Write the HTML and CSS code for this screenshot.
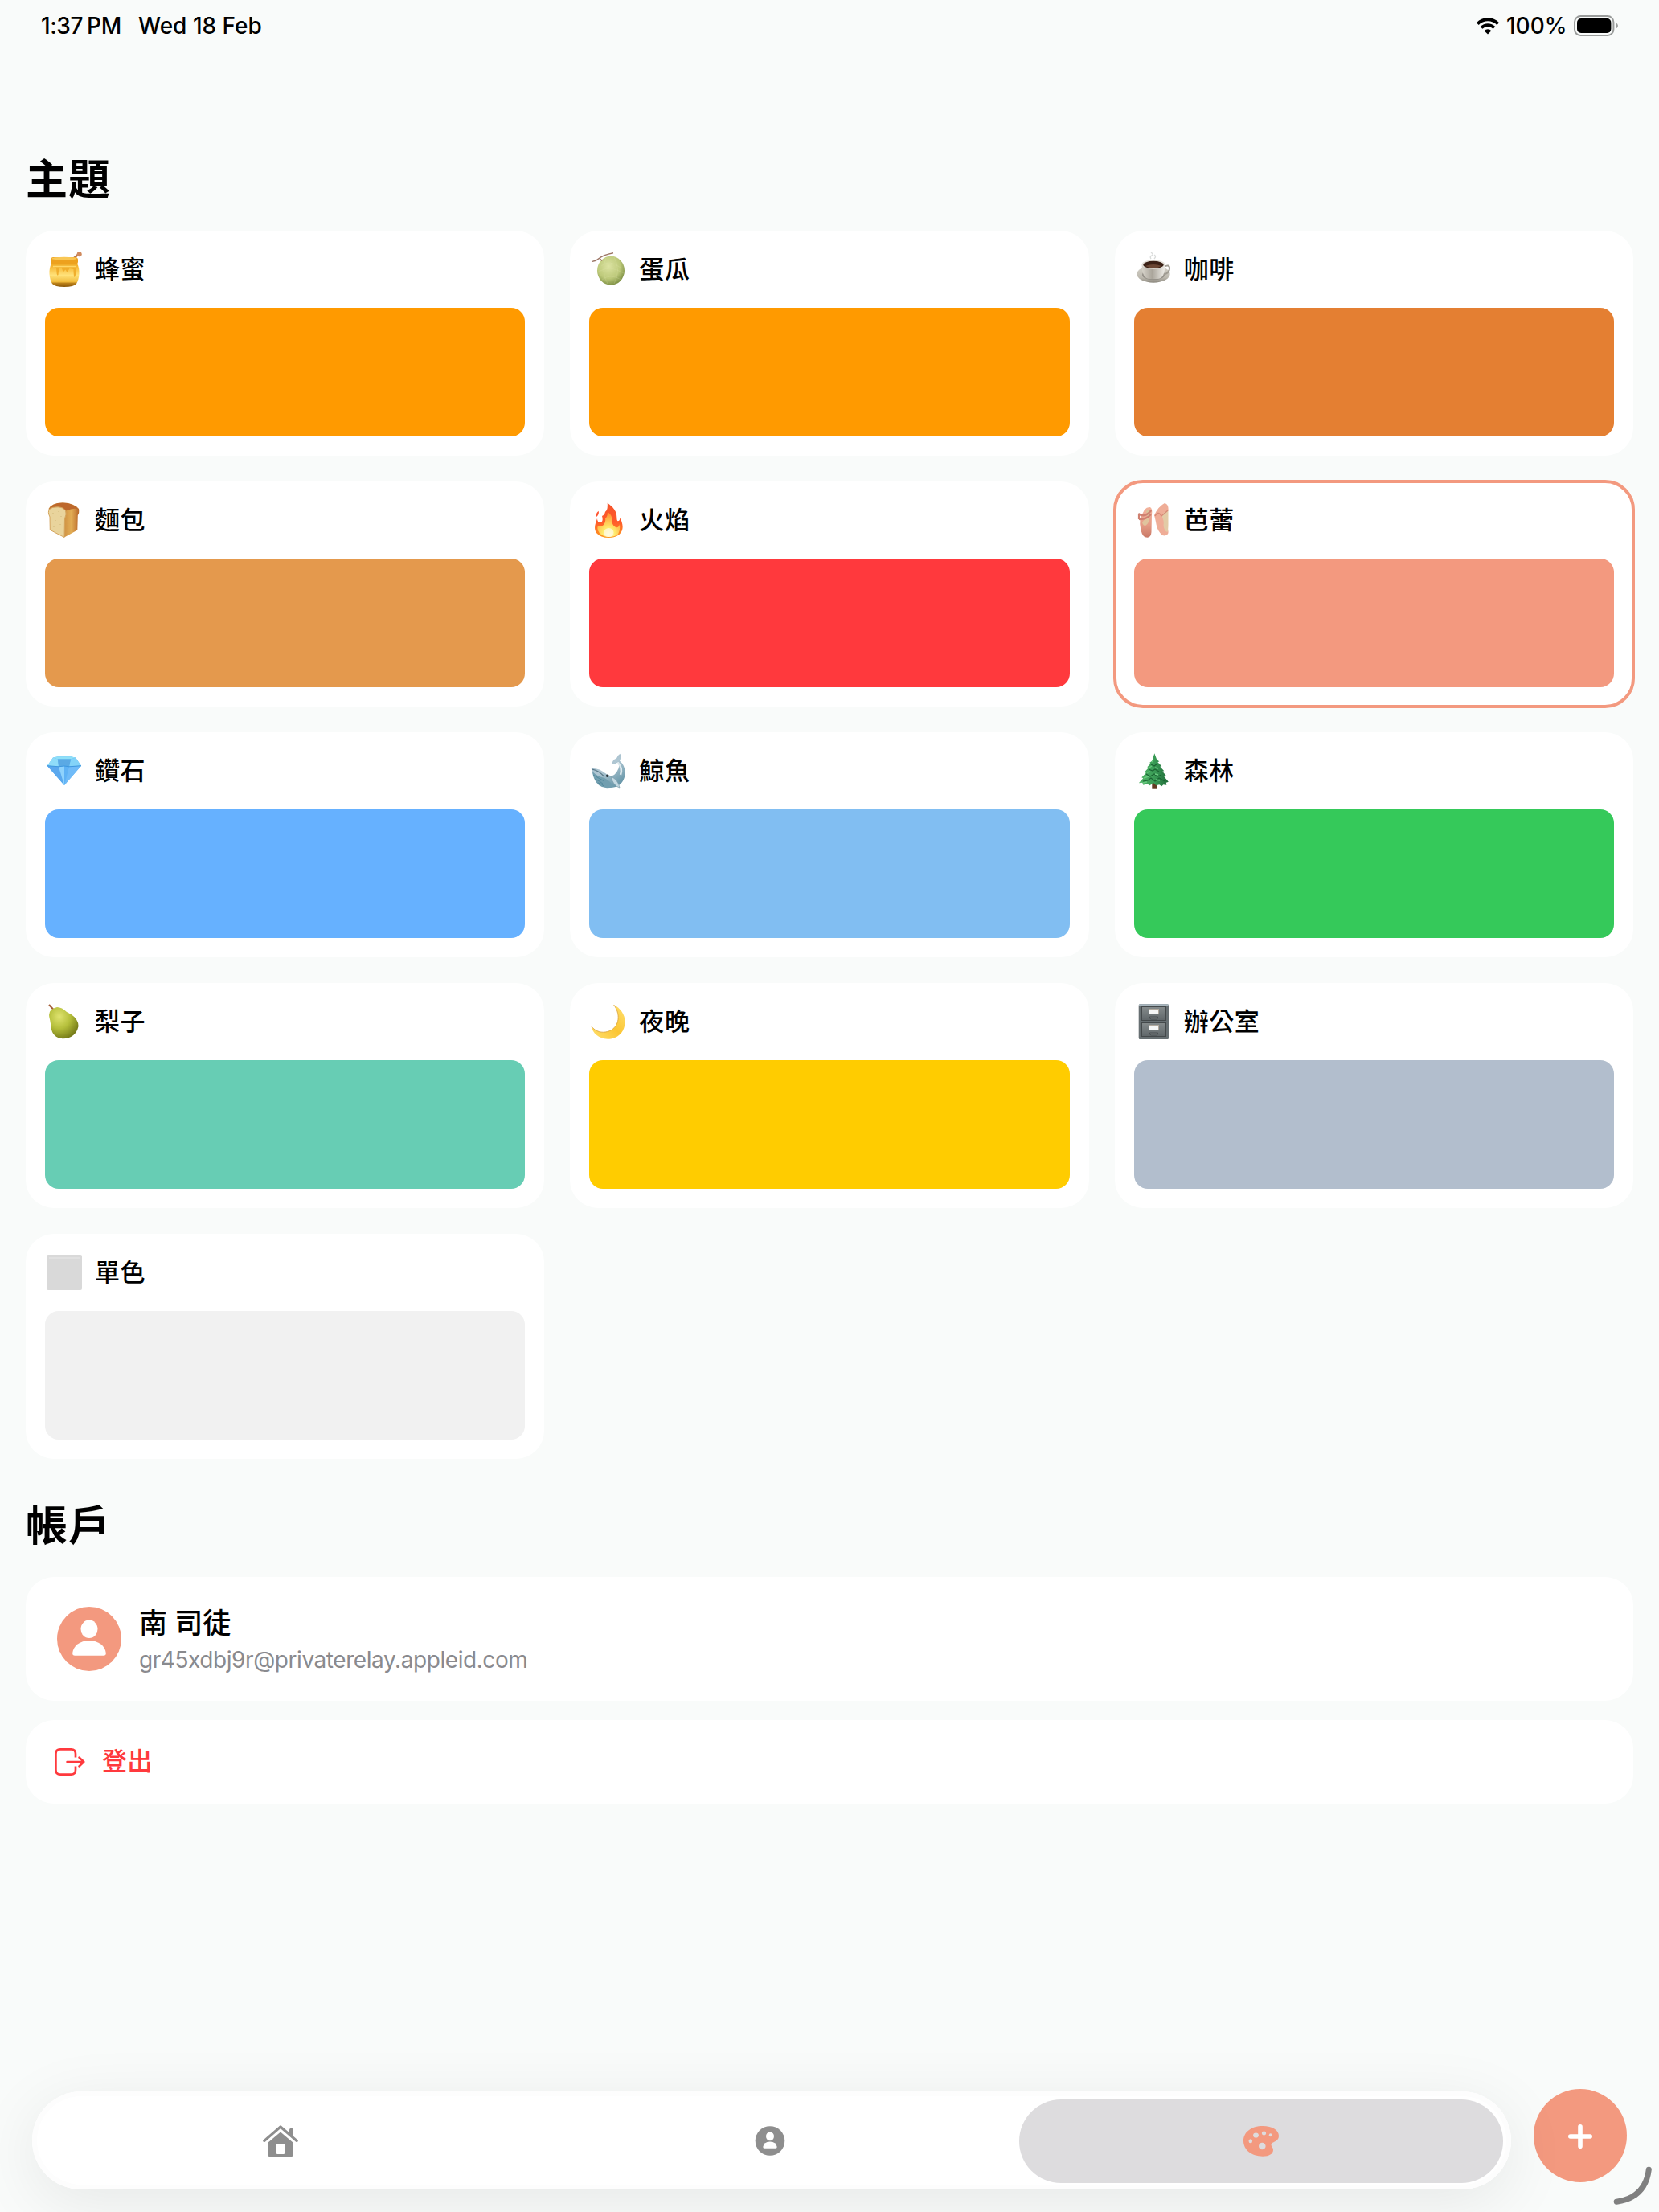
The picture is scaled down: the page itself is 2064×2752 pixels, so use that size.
FILE: index.html
```html
<!DOCTYPE html>
<html lang="zh-Hant">
<head>
    <meta charset="UTF-8" />
    <meta name="viewport" content="width=device-width, initial-scale=1" />
    <title>主題</title>
    <link rel="stylesheet" href="styles.css">
</head>
<body>
    <header class="status-bar">
        <span class="time">1:37<span class="ampm">PM</span></span>
        <span class="date">Wed 18 Feb</span>
        <svg class="wifi" viewBox="0 0 30 21">
            <path d="M2.3 7.6a18 18 0 0 1 25.4 0" fill="none" stroke="#000" stroke-width="4" />
            <path d="M7 12.4a11.4 11.4 0 0 1 16 0" fill="none" stroke="#000" stroke-width="3.8" />
            <path d="M10.6 16.2a6.2 6.2 0 0 1 8.8 0L15 20.6z" />
        </svg>
        <span class="percent">100%</span>
        <svg class="battery" viewBox="0 0 56 26">
            <rect x="1" y="1" width="48.4" height="24" rx="7.5" fill="none" stroke="#9a9c9b" stroke-width="2" />
            <rect x="4" y="4" width="42.4" height="18" rx="5" />
            <path d="M52 9q3 1.4 3 4t-3 4z" fill="#9a9c9b" />
        </svg>
    </header>

    <main>
        <h2>主題</h2>
        <div class="themes">
            <div class="card">
                <div class="name">
                    <svg viewBox="0 0 44 44">
                        <defs>
                            <linearGradient id="pot" x2="0" y2="1"><stop offset="0" stop-color="#f3a81c" /><stop offset=".5" stop-color="#ffe27a" /><stop offset=".78" stop-color="#f0bb3c" /><stop offset=".85" stop-color="#b57b16" /><stop offset="1" stop-color="#8c5a0c" /></linearGradient>
                        </defs>
                        <path d="M33 9l7-6" stroke="#b9764a" stroke-width="2.4" />
                        <circle cx="40.7" cy="3.2" r="3" fill="#d08a5e" />
                        <path d="M6 15C2 22 3 34 7 40q3 4 15 4t15-4c4-6 5-18 1-25z" fill="url(#pot)" />
                        <rect x="5" y="7" width="34" height="9" rx="3.5" fill="#eda11e" />
                        <ellipse cx="22" cy="8.7" rx="15.5" ry="2" fill="#f9c755" />
                        <path d="M7 16h30v5q-1 11-2.200 11T33.500 22l-5-1-3 5-2-3.500-3 3-2-6-3 .5-1 9q-1 2-1.800-1l-.7-8-3-1z" fill="#f0ae2c" />
                        <path d="M8 18.500h28" stroke="#ffd768" stroke-width="1.6" />
                    </svg>
                    <span>蜂蜜</span>
                </div>
                <div class="swatch honey"></div>
            </div>
            <div class="card">
                <div class="name">
                    <svg viewBox="0 0 44 44">
                        <defs>
                            <radialGradient id="melon" cx=".42" cy=".35" r=".7"><stop offset="0" stop-color="#dce3a2" /><stop offset=".6" stop-color="#bdc97a" /><stop offset="1" stop-color="#75883d" /></radialGradient>
                        </defs>
                        <ellipse cx="25" cy="23.7" rx="17" ry="18" fill="url(#melon)" />
                        <path d="M2 12.4q5-.7 9-4.4T28 1.7M11 8.500l3 3" fill="none" stroke="#9b7564" stroke-width="1.4" />
                        <path d="M13 18q10-9 24 2M10 25q13-9 31 2M14 35q10-8 24 0M19 8q-7 16 2 32M29 7q9 16 0 33" fill="none" stroke="#e3e9b4" stroke-width=".7" opacity=".3" />
                    </svg>
                    <span>蛋瓜</span>
                </div>
                <div class="swatch melon"></div>
            </div>
            <div class="card">
                <div class="name">
                    <svg viewBox="0 0 44 44">
                        <defs>
                            <linearGradient id="cup"><stop offset="0" stop-color="#d8d4cb" /><stop offset=".45" stop-color="#aaa59b" /><stop offset="1" stop-color="#efede8" /></linearGradient>
                            <linearGradient id="saucer" x2="0" y2="1"><stop offset="0" stop-color="#d6d3ca" /><stop offset=".7" stop-color="#bdb9af" /><stop offset="1" stop-color="#8d897f" /></linearGradient>
                        </defs>
                        <path d="M19 9q-2-3 1-4t-1-4M23 9q3-3 0-5" fill="none" stroke="#dadcdb" stroke-width="1.4" />
                        <ellipse cx="22" cy="28" rx="20.6" ry="10.7" fill="url(#saucer)" />
                        <ellipse cx="22" cy="29" rx="14" ry="6.5" fill="#96928a" />
                        <path d="M35 19q7-4 7 2t-8 8" fill="none" stroke="#a09c93" stroke-width="2" />
                        <path d="M7.6 16q0 18 10 18h9q10 0 9.6-18z" fill="url(#cup)" />
                        <ellipse cx="22" cy="16" rx="14.4" ry="5.7" fill="#e4e1da" />
                        <ellipse cx="22" cy="16.4" rx="12.6" ry="4.6" fill="#3b2116" />
                        <path d="M12 18q10-4 20 0-9 5-20 0z" fill="#6a4633" />
                    </svg>
                    <span>咖啡</span>
                </div>
                <div class="swatch coffee"></div>
            </div>

            <div class="card">
                <div class="name">
                    <svg viewBox="0 0 44 44">
                        <defs>
                            <linearGradient id="side"><stop offset=".5" stop-color="#cf9142" /><stop offset=".75" stop-color="#e2ad55" /><stop offset="1" stop-color="#b9682a" /></linearGradient>
                        </defs>
                        <path d="M2.5 8Q6 .4 20 .4T40 8q1 5-1.2 8l-.5 18.5L22 43.5z" fill="url(#side)" />
                        <path d="M2.500 9Q6 .4 20 .4T39.800 9Q36 6 24 10.500 14 4 2.500 9z" fill="#bd682c" />
                        <path d="M4.300 34.300L4 18Q1 12 3.500 8.500 7 5.500 14 5.800t9.500 4.500q1.800 4-1 10L22 43.500z" fill="#e9d49c" stroke="#d4a45c" stroke-width="1" />
                        <path d="M8 13v1M15 11v1M11 22v1M17 27v1M9 30v1M18 17v1" stroke="#d5bd7f" stroke-width="1.2" />
                    </svg>
                    <span>麵包</span>
                </div>
                <div class="swatch bread"></div>
            </div>
            <div class="card">
                <div class="name">
                    <svg viewBox="0 0 44 44">
                        <defs>
                            <linearGradient id="fire" x2="0" y2="1"><stop offset="0" stop-color="#f5542c" /><stop offset=".55" stop-color="#ff5a2a" /><stop offset="1" stop-color="#ff9a1f" /></linearGradient>
                            <radialGradient id="core" cx=".5" cy=".9" r=".8"><stop offset="0" stop-color="#fffbe0" /><stop offset=".35" stop-color="#ffea6b" /><stop offset="1" stop-color="#ff9838" /></radialGradient>
                        </defs>
                        <path d="M20.700.7c7 5 12 10 11.700 19.300q0 2.300 1 3.300 3 0 3-4.500c3 7 5 13 1 19Q33 44 22.500 44T7 38C3 32 6 26 8 20q0 5 4 5 4-1 2-8 3-1 4-5.300 3.500-2 2.700-11z" fill="url(#fire)" />
                        <path d="M9.700 10.700q1 4-2.400 7.300Q5.500 14 9.700 10.700z" fill="#ff5330" />
                        <path d="M21 12q6 4 5.500 10t4.500 9q4 1 5-4 1 9-3 13.500Q29 43 22.500 43T11 38.500Q7 34 9 29q4 2 7-1 3-4 2-8 3-2 3-8z" fill="url(#core)" />
                        <ellipse cx="22.500" cy="37.500" rx="6" ry="5.500" fill="#fffbe3" opacity=".7" />
                    </svg>
                    <span>火焰</span>
                </div>
                <div class="swatch fire"></div>
            </div>
            <div class="card selected">
                <div class="name">
                    <svg viewBox="0 0 44 44">
                        <defs>
                            <linearGradient id="shoe" x2="0" y2="1"><stop offset="0" stop-color="#f3b39c" /><stop offset=".6" stop-color="#e59b85" /><stop offset="1" stop-color="#c97866" /></linearGradient>
                        </defs>
                        <path d="M11 9q3-3.500 7-3 3 1.500 2 9l-.5 22q-.5 6.700-5 6.700-6 0-8-9-2-8-1-15z" fill="url(#shoe)" />
                        <path d="M13 11q4-4 5-1 1 5-3 9z" fill="#d9c39b" />
                        <path d="M8 25q3-5 9-6 0 7-5 10-3 0-4-4z" fill="#e0c49d" />
                        <path d="M3.300 14q8 6 16-4M4 21q8 1 15-6M4 14v7" fill="none" stroke="#cf8070" stroke-width="2.2" />
                        <path d="M36 1q5 1 4.700 9-6 6-4 15 5 10 3.500 14-2 3.500-7 2-6-5-7.500-13T23 16Q28 5 36 1z" fill="#efad97" />
                        <path d="M40.500 10q-7 2-8 7 3 6 2 12 1 7 5 8 1-3 1-10V10z" fill="#e3cba6" />
                        <path d="M24 17q4-7 8 0l8-7" fill="none" stroke="#d88976" stroke-width="1.4" />
                    </svg>
                    <span>芭蕾</span>
                </div>
                <div class="swatch ballet"></div>
            </div>

            <div class="card">
                <div class="name">
                    <svg viewBox="0 0 44 44">
                        <path d="M8 5.500L14 4.300H30l6 1.200L43 15.700 22 40 .8 15.700z" fill="#57b2f3" />
                        <path d="M8 5.500l6-1.200H30l6 1.200-6 2H14z" fill="#8fe0f8" />
                        <path d="M8 5.500l6 2 1 9-14.200-.8z" fill="#8fdcf9" />
                        <path d="M36 5.500l-6 2-2 9 15-.8z" fill="#83d3f8" />
                        <path d="M14 7.500h16l-2 9-6-1-7 1z" fill="#5ba9e4" />
                        <path d="M.8 15.700L15 17l7 23z" fill="#5ba8ee" />
                        <path d="M15 17l7-1v24z" fill="#8fd2fc" />
                        <path d="M22 16l6 1-6 23z" fill="#5fb2f5" />
                        <path d="M43 15.700L28 17l-6 23z" fill="#70bbf8" />
                        <path d="M1 15.700l14 1.100 7-.8 6 .8 15-1.100" fill="none" stroke="#3f97de" />
                    </svg>
                    <span>鑽石</span>
                </div>
                <div class="swatch diamond"></div>
            </div>
            <div class="card">
                <div class="name">
                    <svg viewBox="0 0 44 44">
                        <defs>
                            <linearGradient id="whale" x2=".7" y2="1"><stop offset="0" stop-color="#8fafc1" /><stop offset=".5" stop-color="#b0c7d3" /><stop offset="1" stop-color="#6696a8" /></linearGradient>
                        </defs>
                        <path d="M.8 19Q10 18 18 25t14-1q5-7 2.500-13-4 3-8.500 3 1-6 6-7.500Q34 2 36.500.7q2 4-.5 8.800 8 7 6.500 18.500Q39 43 24 43 4 43 .8 19z" fill="url(#whale)" />
                        <path d="M2 23q6 6 15 8 8 4 11 11Q10 47 4 31z" fill="#719eaf" />
                        <path d="M3 27q8 5 14 8M5 32q7 3 11 7M9 37q5 1 8 5" fill="none" stroke="#4e8598" stroke-width=".9" />
                        <path d="M1.500 20q9 2 15 9" fill="none" stroke="#557484" stroke-width="1.2" />
                        <path d="M34 12q6 7 3 15" fill="none" stroke="#dce8ed" stroke-width="2.5" />
                        <path d="M25 29q9 4 11 14-8-2-11-14z" fill="#c4d9e2" stroke="#7b9cab" stroke-width=".7" />
                        <circle cx="20.700" cy="28.300" r="1.8" fill="#283137" />
                    </svg>
                    <span>鯨魚</span>
                </div>
                <div class="swatch whale"></div>
            </div>
            <div class="card">
                <div class="name">
                    <svg viewBox="0 0 44 44">
                        <defs>
                            <linearGradient id="tree"><stop offset="0" stop-color="#54b669" /><stop offset=".5" stop-color="#3b9d57" /><stop offset="1" stop-color="#1f6b39" /></linearGradient>
                        </defs>
                        <rect x="20.300" y="35" width="6" height="8.700" fill="#633a23" />
                        <path d="M23.300.3l3 8 3 2-2 1 5 5-2 .5 5 5.500-2 .5 5 6-3 .5 5.500 6.500-3 1 .5 3-4-.5-2 2-3-2-4 1-3-3-5 3-3-2-5 1.500-1-3-4.500.500 5.500-6-2-1 5.500-5.500-2-1 5-5.500-1.500-1 4-4-1-1.500 3-2z" fill="url(#tree)" />
                        <path d="M19 14l4 2 4-3M16 20l5 2 3-2 5 3M13 26l5 3 5-3 4 3 5-2M9 35l6-1 4-3 5 4 5-4 7 4" fill="none" stroke="#1b6433" stroke-width="1.2" />
                        <path d="M20 11l2-3M17 18l3-2M14 24l4-1M10 31l6-2M9 37l5-1M24 18l4 1M24 26l4 1M25 33l5 1" stroke="#68ca7e" stroke-width="1.4" />
                    </svg>
                    <span>森林</span>
                </div>
                <div class="swatch forest"></div>
            </div>

            <div class="card">
                <div class="name">
                    <svg viewBox="0 0 44 44">
                        <defs>
                            <radialGradient id="pear" cx=".35" cy=".3" r=".75"><stop offset="0" stop-color="#dfe36f" /><stop offset=".5" stop-color="#b5bf3b" /><stop offset="1" stop-color="#737817" /></radialGradient>
                        </defs>
                        <path d="M3 1l5.500 6" stroke="#a35d37" stroke-width="2" />
                        <path d="M13 4q6 0 12 6 15 7 14.500 18Q36 43 20 43.300 7 42 5.500 29 5 23 3.500 17 1 7 13 4z" fill="url(#pear)" />
                    </svg>
                    <span>梨子</span>
                </div>
                <div class="swatch pear"></div>
            </div>
            <div class="card">
                <div class="name">
                    <svg viewBox="0 0 44 44">
                        <defs>
                            <linearGradient id="moon" x1="1" x2="0" y2="1"><stop offset="0" stop-color="#ffe070" /><stop offset=".5" stop-color="#fbc634" /><stop offset="1" stop-color="#ffe070" /></linearGradient>
                        </defs>
                        <path d="M28.600 1C37 5 43 14 42.700 23 42 36 33 43.700 21 43.700 10 43.500 2 36 .8 28c6 7 13 8.300 20 6.500C34 31 39 15 28.600 1z" fill="url(#moon)" />
                        <path d="M.8 28c6 7 13 8.300 20 6.500C34 31 39 15 28.600 1" fill="none" stroke="#d9a13a" stroke-width=".8" />
                    </svg>
                    <span>夜晚</span>
                </div>
                <div class="swatch night"></div>
            </div>
            <div class="card">
                <div class="name">
                    <svg viewBox="0 0 44 44">
                        <defs>
                            <linearGradient id="cabinet" x2="0" y2="1"><stop offset="0" stop-color="#858b8c" /><stop offset="1" stop-color="#5f6669" /></linearGradient>
                        </defs>
                        <rect x="3.700" y=".3" width="37.300" height="43.700" rx="1.500" fill="#676f72" />
                        <rect x="4" y=".3" width="36.700" height="2.500" rx="1" fill="#a8b6be" />
                        <rect x="7.500" y="3.500" width="30" height="17" fill="url(#cabinet)" stroke="#44494b" />
                        <rect x="7.500" y="23.500" width="30" height="17" fill="url(#cabinet)" stroke="#44494b" />
                        <rect x="16.500" y="6.500" width="12" height="6" fill="#f5f6f6" stroke="#b1a99d" />
                        <rect x="16.500" y="26.500" width="12" height="6" fill="#f5f6f6" stroke="#b1a99d" />
                        <path d="M17.500 16h10v1q0 2-2 2h-6q-2 0-2-2zM17.500 36h10v1q0 2-2 2h-6q-2 0-2-2z" fill="#73797b" stroke="#44494b" stroke-width=".8" />
                    </svg>
                    <span>辦公室</span>
                </div>
                <div class="swatch office"></div>
            </div>

            <div class="card">
                <div class="name">
                    <svg viewBox="0 0 44 44">
                        <rect width="44" height="44" rx="2" fill="#d9d9d9" />
                        <path d="M3 4h38" stroke="#e1e1e1" stroke-width="2" />
                    </svg>
                    <span>單色</span>
                </div>
                <div class="swatch mono"></div>
            </div>
        </div>

        <h2>帳戶</h2>
        <div class="row account">
            <svg class="avatar" viewBox="0 0 80 80">
                <circle cx="40" cy="40" r="40" fill="#f3997f" />
                <ellipse cx="40" cy="27.800" rx="10.500" ry="11.200" fill="#fff" />
                <path d="M19.200 57.500C20 49 28.500 42 40 42s20 7 20.800 15.500q.2 3.200-3 3.200H22.200q-3.200 0-3-3.200z" fill="#fff" />
            </svg>
            <div>
                <div class="user">南 司徒</div>
                <div class="email">gr45xdbj9r@privaterelay.appleid.com</div>
            </div>
        </div>
        <div class="row signout">
            <svg viewBox="0 0 38 34" fill="none" stroke="#ff393d" stroke-width="2.700" stroke-linecap="round" stroke-linejoin="round">
                <path d="M26 11.500V7q0-5.600-5.600-5.600H7Q1.400 1.400 1.400 7v20q0 5.600 5.600 5.600h13.400q5.600 0 5.600-5.600v-4.500" stroke-linecap="butt" />
                <path d="M15.500 17h20.300M30.500 11.500L36.300 17l-5.800 5.500" stroke-width="2.500" />
            </svg>
            <span>登出</span>
        </div>
    </main>

    <footer>
        <nav>
            <a class="tab">
                <svg viewBox="0 0 44 40" fill="#8e8e8e">
                    <path d="M1.800 19.500L22 2l20.200 17.500" fill="none" stroke="#8e8e8e" stroke-width="3.200" stroke-linecap="round" stroke-linejoin="round" />
                    <path d="M33 5.500q0-1.500 1.500-1.500h2q1.500 0 1.500 1.500V16l-5-4.500z" />
                    <path d="M22 8.500L38 22v13.500q0 4-4 4H10q-4 0-4-4V22zM18 23q-1 0-1 1v11q0 1 1 1h8q1 0 1-1V24q0-1-1-1z" fill-rule="evenodd" />
                </svg>
            </a>
            <a class="tab">
                <svg viewBox="0 0 44 40">
                    <circle cx="22" cy="19.500" r="18.300" fill="#8e8e8e" />
                    <ellipse cx="22" cy="13.800" rx="5" ry="5.500" fill="#fff" />
                    <path d="M13.300 27q1-6.500 8.700-6.500t8.700 6.500q0 1.800-1.700 1.800H15q-1.700 0-1.700-1.800z" fill="#fff" />
                </svg>
            </a>
            <a class="tab active">
                <svg viewBox="0 0 46 40">
                    <path d="M25 1C11 1 1 8.500 1 19.500S11 38.700 25 38.700c8 0 13-3.200 13-8 0-3-2.500-4-2.500-6.500 0-3.500 9.500-3.200 9.500-10.700C45 6 37 1 25 1z" fill="#f3997f" />
                    <g fill="#dddcde">
                        <ellipse cx="16.500" cy="12.500" rx="3.400" ry="3.100" />
                        <ellipse cx="26.500" cy="10" rx="2.600" ry="2.400" />
                        <ellipse cx="34.700" cy="12.200" rx="1.900" ry="2" />
                        <ellipse cx="9.800" cy="19.800" rx="2.300" ry="2.500" />
                        <circle cx="24.300" cy="26" r="4.300" />
                    </g>
                </svg>
            </a>
        </nav>
        <button class="add">
            <svg viewBox="0 0 30 30" stroke="#fff" stroke-width="5.600" stroke-linecap="round">
                <path d="M15 2.800v24.400M2.800 15h24.400" />
            </svg>
        </button>
    </footer>

    <svg class="corner" viewBox="0 0 50 50">
        <path d="M44.300 4.200Q40 39 4.200 44.200" fill="none" stroke="#808080" stroke-width="7" stroke-linecap="round" />
    </svg>
</body>
</html>
```
FILE: styles.css
```css
* {
    box-sizing: border-box;
}

body {
    margin: 0;
    height: 2752px;
    display: flex;
    flex-direction: column;
    overflow: hidden;
    position: relative;
    background: #f9fbfa;
    color: #000;
    font-family: Inter, "Noto Sans CJK TC", sans-serif;
}

svg {
    display: block;
    flex: none;
}

/* status bar */
.status-bar {
    height: 64px;
    padding: 0 50px 0 51px;
    display: flex;
    align-items: center;
    font-size: 28px;
    font-weight: 500;
    line-height: 66px;
    white-space: nowrap;
}

.time {
    width: 121px;
    letter-spacing: -0.4px;
}

.ampm {
    margin-left: 5px;
}

.wifi {
    width: 30px;
    height: 21px;
    margin-left: auto;
}

.percent {
    width: 75px;
    margin: 0 9px 0 8px;
}

.battery {
    width: 56px;
    height: 26px;
}

main {
    padding: 124px 32px 0;
}

h2 {
    margin: 0 0 27px;
    font-size: 52px;
    font-weight: 700;
    line-height: 72px;
    height: 72px;
    letter-spacing: 1px;
}

/* theme grid */
.themes {
    display: grid;
    grid-template-columns: repeat(3, 1fr);
    gap: 32px;
    margin-bottom: 48px;
}

.card {
    height: 280px;
    padding: 24px;
    background: #fff;
    border-radius: 35px;
}

.selected {
    outline: 4px solid #f3997f;
    outline-offset: -2px;
}

.name {
    display: flex;
    align-items: center;
    gap: 16px;
    height: 48px;
    padding-left: 2px;
    margin-bottom: 24px;
    font-size: 31px;
    font-weight: 500;
    line-height: 48px;
    letter-spacing: 0.6px;
}

.name svg {
    width: 44px;
    height: 44px;
}

.swatch {
    height: 160px;
    border-radius: 17px;
}

.honey { background: #ff9a00; }
.melon { background: #ff9a00; }
.coffee { background: #e47f32; }
.bread { background: #e4994d; }
.fire { background: #ff393d; }
.ballet { background: #f3997f; }
.diamond { background: #66b1ff; }
.whale { background: #81bef2; }
.forest { background: #35c95a; }
.pear { background: #67cdb4; }
.night { background: #ffcc00; }
.office { background: #b2becd; }
.mono { background: #f1f1f1; }

/* account */
.row {
    display: flex;
    align-items: center;
    background: #fff;
    border-radius: 35px;
}

.account {
    height: 154px;
    padding-left: 39px;
    gap: 22px;
    margin-bottom: 24px;
}

.avatar {
    width: 80px;
    height: 80px;
}

.user {
    font-size: 35px;
    font-weight: 500;
    line-height: 50px;
    height: 50px;
}

.email {
    color: #8a8a8e;
    font-size: 28px;
    line-height: 42px;
    height: 40px;
    letter-spacing: -0.43px;
}

.signout {
    height: 104px;
    padding-left: 36px;
    gap: 21px;
    color: #ff393d;
    font-size: 31px;
    font-weight: 500;
    letter-spacing: 0.6px;
}

.signout svg {
    width: 38px;
    height: 34px;
}

.signout span {
    line-height: 48px;
    padding-bottom: 3px;
}

/* tab bar */
footer {
    display: flex;
    align-items: flex-start;
    margin-top: auto;
    padding: 0 40px 28px;
}

nav {
    display: flex;
    position: relative;
    z-index: 1;
    width: 1840px;
    height: 122px;
    margin-top: 3px;
    padding: 10px 10px 8px 5px;
    background: #fff;
    border-radius: 61px;
    box-shadow: 0 16px 80px rgba(0, 0, 0, 0.08), inset 0 0 0 6px #fdfdfd;
}

.tab {
    flex: 1;
    display: flex;
    align-items: center;
    justify-content: center;
    border-radius: 52px;
}

.tab svg {
    width: 44px;
    height: 40px;
}

.active {
    flex: 0 0 602px;
    margin-left: 6px;
    background: #dddcde;
}

.active svg {
    width: 46px;
}

.add {
    display: flex;
    align-items: center;
    justify-content: center;
    width: 116px;
    height: 116px;
    margin-left: 28px;
    padding: 2px 0 0;
    border: none;
    border-radius: 50%;
    background: #f3997f;
}

.add svg {
    width: 30px;
    height: 30px;
}

/* resize handle over the window corner */
.corner {
    position: absolute;
    right: 7px;
    bottom: 7px;
    width: 50px;
    height: 50px;
}
```
